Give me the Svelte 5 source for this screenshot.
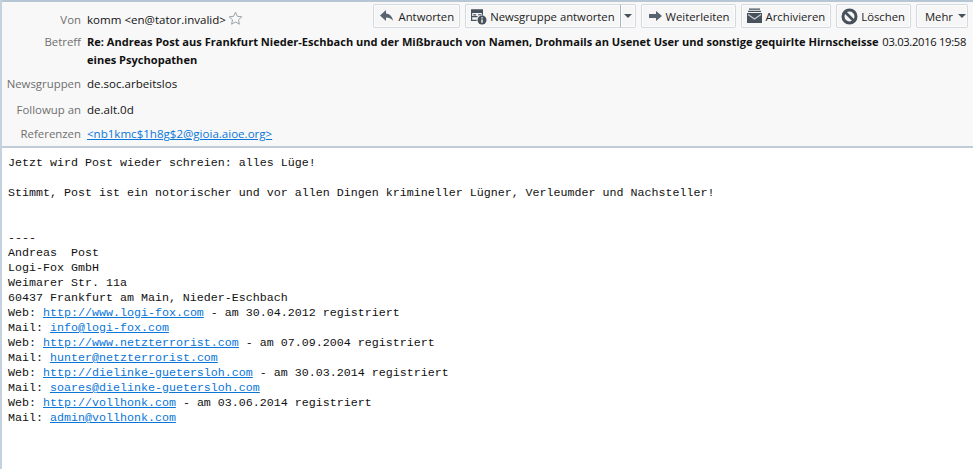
<script>
  const lines = [
    ['Web', 'http://www.logi-fox.com', ' - am 30.04.2012 registriert'],
    ['Mail', 'info@logi-fox.com', ''],
    ['Web', 'http://www.netzterrorist.com', ' - am 07.09.2004 registriert'],
    ['Mail', 'hunter@netzterrorist.com', ''],
    ['Web', 'http://dielinke-guetersloh.com', ' - am 30.03.2014 registriert'],
    ['Mail', 'soares@dielinke-guetersloh.com', ''],
    ['Web', 'http://vollhonk.com', ' - am 03.06.2014 registriert'],
    ['Mail', 'admin@vollhonk.com', '']
  ];
</script>

<div class="window">
  <header class="head">
    <div class="top">
      <div class="row from">
        <span class="label">Von</span>
        <span class="value">komm &lt;en@tator.invalid&gt;</span>
        <svg class="star" width="15" height="15" viewBox="0 0 15 15">
          <path d="M7.5 1.2l1.9 4.1 4.4.5-3.3 3 .9 4.4-3.9-2.2-3.9 2.2.9-4.4-3.3-3 4.4-.5z" fill="none" stroke="#9aa3ab" />
        </svg>
      </div>
      <div class="tools">
        <button class="reply">
          <svg width="16" height="14" viewBox="0 0 16 14"><path d="M7 1L1 6.5 7 12V8.6c3 0 5 .8 7 3.2-.4-4-3-7-7-7.4z" fill="#57636e" /></svg>
          Antworten
        </button>
        <div class="split">
          <button class="main wide-icon">
            <svg width="17" height="17" viewBox="0 0 17 17">
              <path d="M1 1.5h12v6h-1.2V5H2.2v3h5.3v1.2H2.2v2.6h4.5V13H1zM3.2 6.2h3v1.2h-3zM8 6.2h3v1H8z" fill="#46515c" />
              <rect x="1" y="1.5" width="12" height="2.6" fill="#46515c" />
              <circle cx="12" cy="12" r="4.5" fill="#46515c" />
              <path d="M11.3 9.2h1.4v1.4h-1.4zM11.3 11.4h1.4v3.4h-1.4z" fill="#fff" />
            </svg>
            Newsgruppe antworten
          </button>
          <button class="drop" aria-label="Mehr Optionen"><span class="caret"></span></button>
        </div>
        <button>
          <svg width="16" height="14" viewBox="0 0 16 14"><path d="M9 2l6 5-6 5V9H2V5h7z" fill="#57636e" /></svg>
          Weiterleiten
        </button>
        <button class="wide-icon">
          <svg width="17" height="16" viewBox="0 0 17 16">
            <path d="M3 0.5h11v1.2H3zM2 2.7h13v1.2H2z" fill="#46515c" />
            <path d="M1 5h15v10H1z" fill="#46515c" />
            <path d="M2 6.5l6.5 4.5L15 6.5" fill="none" stroke="#c8cdd2" stroke-width="1.2" />
          </svg>
          Archivieren
        </button>
        <button class="wide-icon">
          <svg width="17" height="17" viewBox="0 0 17 17">
            <circle cx="8.5" cy="8.5" r="6.5" fill="none" stroke="#46515c" stroke-width="3" />
            <path d="M4 4l9 9" stroke="#46515c" stroke-width="2.6" />
          </svg>
          Löschen
        </button>
        <button class="more">Mehr <span class="caret"></span></button>
      </div>
    </div>

    <div class="row subject">
      <span class="label">Betreff</span>
      <strong class="title">Re: Andreas Post aus Frankfurt Nieder-Eschbach und der Mißbrauch von Namen, Drohmails an Usenet User und sonstige gequirlte Hirnscheisse eines Psychopathen</strong>
      <span class="date">03.03.2016 19:58</span>
    </div>
    <div class="row groups">
      <span class="label">Newsgruppen</span>
      <span class="value">de.soc.arbeitslos</span>
    </div>
    <div class="row followup">
      <span class="label">Followup an</span>
      <span class="value">de.alt.0d</span>
    </div>
    <div class="row refs">
      <span class="label">Referenzen</span>
      <a class="value" href="#refs">&lt;nb1kmc$1h8g$2@gioia.aioe.org&gt;</a>
    </div>
  </header>

  <main class="body">
    <div>Jetzt wird Post wieder schreien: alles Lüge!</div>
    <br />
    <div>Stimmt, Post ist ein notorischer und vor allen Dingen krimineller Lügner, Verleumder und Nachsteller!</div>
    <br />
    <br />
    <div>----</div>
    <div>Andreas  Post</div>
    <div>Logi-Fox GmbH</div>
    <div>Weimarer Str. 11a</div>
    <div>60437 Frankfurt am Main, Nieder-Eschbach</div>
    {#each lines as [kind, link, rest]}
      <div>{kind}: <a href="#link">{link}</a>{rest}</div>
    {/each}
  </main>
</div>

<style>
  :global(body) {
    margin: 0;
    background: #fff;
  }
  .window {
    width: 973px;
    height: 469px;
    overflow: hidden;
    box-sizing: border-box;
    border-left: 2px solid #c4d2df;
    background: #fff;
  }
  .head {
    height: 148px;
    box-sizing: border-box;
    border-top: 2px solid #b6c6d4;
    border-bottom: 2px solid #c0ccd8;
    background: #f8f8f8;
    font-family: "Open Sans", "Noto Sans", sans-serif;
    font-size: 11.55px;
    color: #111;
  }
  .top {
    display: flex;
    justify-content: space-between;
    height: 29px;
  }
  .row {
    display: flex;
    align-items: baseline;
  }
  .from {
    padding-top: 9px;
    align-items: flex-start;
    line-height: 17px;
  }
  .label {
    flex: none;
    width: 79px;
    margin-right: 6px;
    text-align: right;
    font-size: 11.4px;
    color: #6f6f6f;
  }
  .star {
    margin-left: 2px;
  }
  .tools {
    display: flex;
    gap: 5px;
    padding: 2px 5px 0 0;
  }
  button {
    display: flex;
    align-items: center;
    gap: 3px;
    height: 24px;
    box-sizing: border-box;
    padding: 0 5px;
    border: 1px solid #d3d9df;
    border-radius: 2px;
    background: #f6f6f6;
    box-shadow: inset 0 0 0 1px #fdfdfd;
    font: inherit;
    font-size: 11.3px;
    color: #222;
  }
  .reply {
    gap: 4px;
  }
  .wide-icon {
    padding-left: 4px;
  }
  .split {
    display: flex;
  }
  .main {
    border-right: 1px solid #aab4be;
    border-radius: 2px 0 0 2px;
  }
  .drop {
    width: 15px;
    padding: 0;
    justify-content: center;
    border-left: 0;
    border-radius: 0 2px 2px 0;
  }
  .more {
    gap: 5px;
    padding: 0 1px 0 8px;
  }
  .caret {
    width: 0;
    height: 0;
    border: 4px solid transparent;
    border-top: 4px solid #46515c;
    border-bottom: 0;
  }
  .subject {
    padding-top: 2px;
    line-height: 18px;
  }
  .title {
    flex: 1;
    font-size: 11.07px;
    font-weight: 700;
  }
  .date {
    flex: none;
    margin: 0 7px 0 0;
    font-size: 11.2px;
    letter-spacing: -0.3px;
  }
  .groups {
    margin-top: 6px;
    line-height: 17px;
  }
  .followup {
    margin-top: 9px;
    line-height: 17px;
  }
  .refs {
    margin-top: 7px;
    line-height: 17px;
  }
  .refs a {
    color: #0a76d8;
  }
  .body {
    padding: 8px 6px 0 6px;
    font-family: "Liberation Mono", monospace;
    font-size: 11.67px;
    line-height: 15px;
    color: #111;
  }
  .body div {
    white-space: pre;
  }
  .body a {
    color: #0a76d8;
  }
</style>
